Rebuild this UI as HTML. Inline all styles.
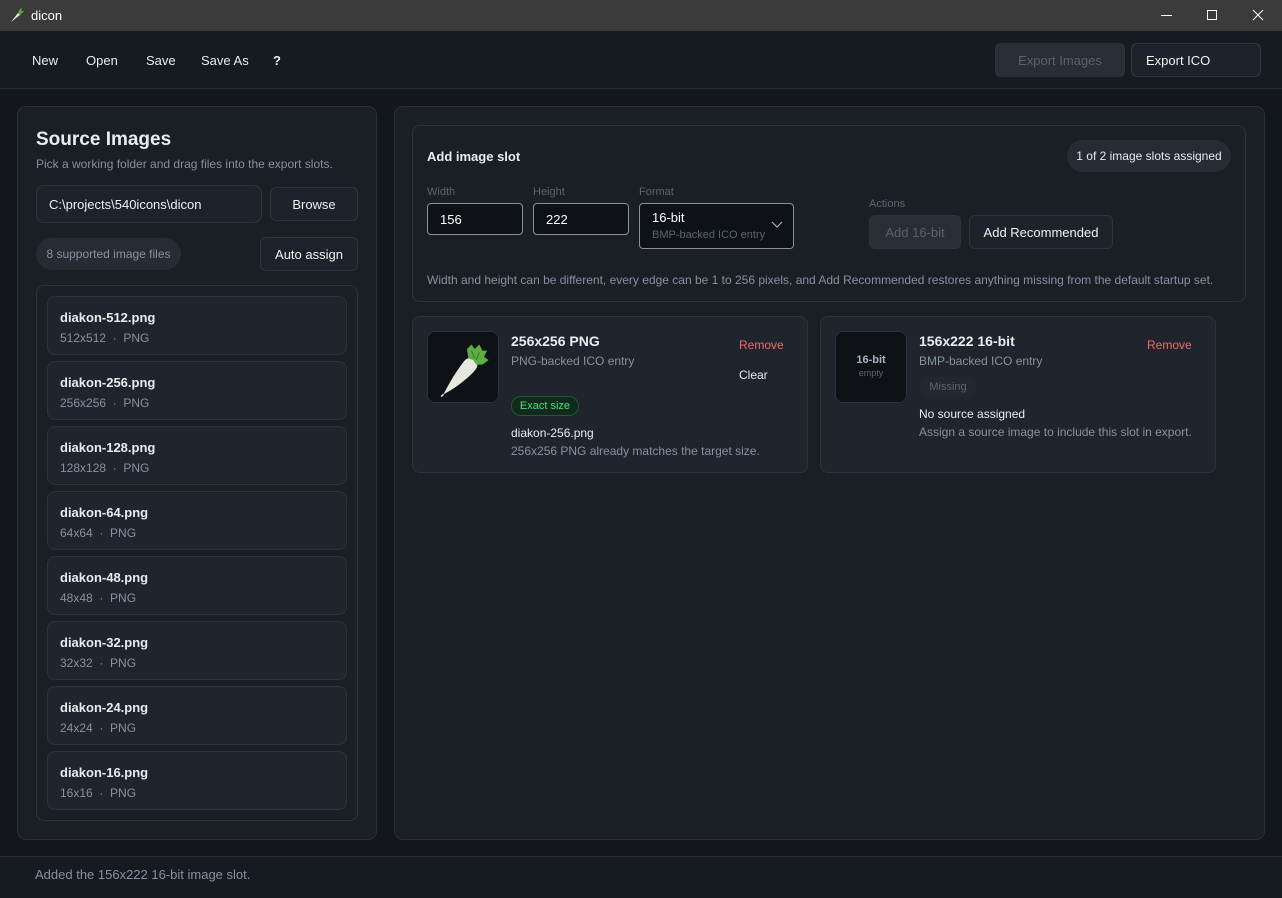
<!DOCTYPE html>
<html><head><meta charset="utf-8"><style>
*{box-sizing:border-box;margin:0;padding:0}
body{width:1282px;height:898px;background:#13171d;font-family:"Liberation Sans",sans-serif;color:#e8ecf2;position:relative;overflow:hidden;font-size:13px}
.a{position:absolute}
.tb{left:0;top:0;width:1282px;height:31px;background:#3b3b3b}
.bar{left:0;top:31px;width:1282px;height:58px;background:#161a21;border-bottom:1px solid #2a2f38}
.pan{background:#1a1e25;border:1px solid #2a2f38;border-radius:9px}
.card{background:#1f242d;border:1px solid #2d333d;border-radius:8px}
.btn{background:#1e232b;border:1px solid #2f3540;border-radius:6px;color:#eef1f5;display:flex;align-items:center;justify-content:center;font-size:13px}
.dis{background:#292d35;border-color:#2e323a;color:#5b626c}
.inp{background:#0e1116;border:1px solid #8a9099;border-radius:4px;color:#fff;padding-left:12px;display:flex;align-items:center;font-size:13px}
.lbl{font-size:11px;color:#5c6570}
.mut{color:#8792a0;font-size:12px}
.fi{left:10px;width:300px;height:59px}
.fi b{position:absolute;left:12px;top:13px;font-size:13px}
.fi span{position:absolute;left:12px;top:34px;font-size:12px;color:#8792a0}
</style></head><body>
<div class="a tb"></div>
<svg class="a" style="left:9px;top:7px" width="16" height="16" viewBox="0 0 16 16"><path d="M2 15 L9 6 L11 8 Z" fill="#e8e8e0"/><path d="M9 6 L11 2 L13 1 L12 4 L15 4 L12 7 L11 8Z" fill="#5aa844"/></svg>
<div class="a" style="left:31px;top:8px;font-size:13px;color:#fff">dicon</div>
<div class="a" style="left:1161px;top:15px;width:11px;height:1px;background:#fff"></div>
<div class="a" style="left:1207px;top:10px;width:10px;height:10px;border:1px solid #fff"></div>
<svg class="a" style="left:1252px;top:9px" width="12" height="12"><path d="M1 1L11 11M11 1L1 11" stroke="#fff" stroke-width="1"/></svg>

<div class="a bar"></div>
<div class="a" style="left:32px;top:53px;font-size:13px">New</div>
<div class="a" style="left:86px;top:53px;font-size:13px">Open</div>
<div class="a" style="left:146px;top:53px;font-size:13px">Save</div>
<div class="a" style="left:201px;top:53px;font-size:13px">Save As</div>
<div class="a" style="left:273px;top:53px;font-size:13px;font-weight:bold">?</div>
<div class="a btn dis" style="left:995px;top:43px;width:130px;height:34px">Export Images</div>
<div class="a btn" style="left:1131px;top:43px;width:130px;height:34px;justify-content:flex-start;padding-left:14px">Export ICO</div>

<div class="a pan" style="left:17px;top:106px;width:360px;height:734px"></div>
<div class="a" style="left:36px;top:129px;font-size:19px;font-weight:bold">Source Images</div>
<div class="a mut" style="left:36px;top:157px">Pick a working folder and drag files into the export slots.</div>
<div class="a btn" style="left:36px;top:185px;width:226px;height:38px;justify-content:flex-start;padding-left:12px;border-radius:8px">C:\projects\540icons\dicon</div>
<div class="a btn" style="left:270px;top:187px;width:88px;height:34px">Browse</div>
<div class="a" style="left:36px;top:238px;width:145px;height:32px;border-radius:16px;background:#262b34;color:#8792a0;font-size:12px;display:flex;align-items:center;justify-content:center">8 supported image files</div>
<div class="a btn" style="left:260px;top:237px;width:98px;height:34px">Auto assign</div>
<div class="a" style="left:36px;top:285px;width:322px;height:536px;border:1px solid #2d333d;border-radius:8px;background:#1a1e25">
<div class="a card fi" style="top:10px"><b>diakon-512.png</b><span>512x512 &nbsp;·&nbsp; PNG</span></div>
<div class="a card fi" style="top:75px"><b>diakon-256.png</b><span>256x256 &nbsp;·&nbsp; PNG</span></div>
<div class="a card fi" style="top:140px"><b>diakon-128.png</b><span>128x128 &nbsp;·&nbsp; PNG</span></div>
<div class="a card fi" style="top:205px"><b>diakon-64.png</b><span>64x64 &nbsp;·&nbsp; PNG</span></div>
<div class="a card fi" style="top:270px"><b>diakon-48.png</b><span>48x48 &nbsp;·&nbsp; PNG</span></div>
<div class="a card fi" style="top:335px"><b>diakon-32.png</b><span>32x32 &nbsp;·&nbsp; PNG</span></div>
<div class="a card fi" style="top:400px"><b>diakon-24.png</b><span>24x24 &nbsp;·&nbsp; PNG</span></div>
<div class="a card fi" style="top:465px"><b>diakon-16.png</b><span>16x16 &nbsp;·&nbsp; PNG</span></div>
</div>

<div class="a pan" style="left:394px;top:106px;width:871px;height:734px"></div>
<div class="a" style="left:412px;top:125px;width:834px;height:177px;background:#1a1e25;border:1px solid #2d333d;border-radius:8px"></div>
<div class="a" style="left:427px;top:149px;font-size:13px;font-weight:bold">Add image slot</div>
<div class="a" style="left:1067px;top:140px;width:164px;height:32px;border-radius:16px;background:#262b34;font-size:12px;display:flex;align-items:center;justify-content:center">1 of 2 image slots assigned</div>
<div class="a lbl" style="left:427px;top:186px">Width</div>
<div class="a lbl" style="left:533px;top:186px">Height</div>
<div class="a lbl" style="left:639px;top:186px">Format</div>
<div class="a lbl" style="left:869px;top:198px">Actions</div>
<div class="a inp" style="left:427px;top:203px;width:96px;height:32px">156</div>
<div class="a inp" style="left:533px;top:203px;width:96px;height:32px">222</div>
<div class="a inp" style="left:639px;top:203px;width:155px;height:46px;display:block;padding-top:6px"><div>16-bit</div><div style="font-size:11px;color:#5c6570;margin-top:4px">BMP-backed ICO entry</div></div>
<svg class="a" style="left:771px;top:221px" width="12" height="8"><path d="M1 1L6 6L11 1" stroke="#bbb" fill="none"/></svg>
<div class="a btn dis" style="left:869px;top:215px;width:92px;height:34px">Add 16-bit</div>
<div class="a btn" style="left:969px;top:215px;width:144px;height:34px">Add Recommended</div>
<div class="a mut" style="left:427px;top:273px">Width and height can be different, every edge can be 1 to 256 pixels, and Add Recommended restores anything missing from the default startup set.</div>

<div class="a card" style="left:412px;top:316px;width:396px;height:157px"></div>
<div class="a" style="left:427px;top:331px;width:72px;height:72px;background:#0e1116;border:1px solid #2d333d;border-radius:8px"></div>
<svg class="a" style="left:428px;top:332px" width="70" height="70" viewBox="0 0 90 90"><path d="M20 80 C26 68 34 54 46 38 C50 33 58 30 62 36 C66 42 62 48 58 52 C46 64 32 74 20 80Z" fill="#e6e8e0"/><path d="M20 80 L17 83" stroke="#ddd" stroke-width="2"/><path d="M52 34 L50 22 L56 16 L60 22 L66 16 L70 24 L76 24 L72 32 L78 36 L70 42 L62 42 L58 36Z" fill="#5fae45"/><path d="M56 24 L60 34 M66 26 L62 36" stroke="#3d7e2e" stroke-width="1.5"/></svg>
<div class="a" style="left:511px;top:333px;font-size:14px;font-weight:bold">256x256 PNG</div>
<div class="a mut" style="left:511px;top:354px">PNG-backed ICO entry</div>
<div class="a" style="left:739px;top:338px;font-size:12px;color:#f06a6a">Remove</div>
<div class="a" style="left:739px;top:368px;font-size:12px">Clear</div>
<div class="a" style="left:511px;top:396px;width:68px;height:20px;border-radius:10px;background:#122a1d;border:1px solid #1f5a33;color:#4ee07e;font-size:11px;display:flex;align-items:center;justify-content:center">Exact size</div>
<div class="a" style="left:511px;top:426px;font-size:12px">diakon-256.png</div>
<div class="a mut" style="left:511px;top:444px">256x256 PNG already matches the target size.</div>

<div class="a card" style="left:820px;top:316px;width:396px;height:157px"></div>
<div class="a" style="left:835px;top:331px;width:72px;height:72px;background:#0e1116;border:1px solid #2d333d;border-radius:8px;text-align:center"><div style="margin-top:22px;font-size:11px;font-weight:bold;color:#aab2be">16-bit</div><div style="font-size:9px;color:#5c6570;margin-top:2px">empty</div></div>
<div class="a" style="left:919px;top:333px;font-size:14px;font-weight:bold">156x222 16-bit</div>
<div class="a mut" style="left:919px;top:354px">BMP-backed ICO entry</div>
<div class="a" style="left:1147px;top:338px;font-size:12px;color:#f06a6a">Remove</div>
<div class="a" style="left:919px;top:377px;width:58px;height:20px;border-radius:10px;background:#232830;color:#5c6570;font-size:11px;display:flex;align-items:center;justify-content:center">Missing</div>
<div class="a" style="left:919px;top:407px;font-size:12px">No source assigned</div>
<div class="a mut" style="left:919px;top:425px">Assign a source image to include this slot in export.</div>

<div class="a" style="left:0;top:856px;width:1282px;height:42px;background:#161a21;border-top:1px solid #2a2f38"></div>
<div class="a" style="left:35px;top:867px;font-size:13px;color:#8792a0">Added the 156x222 16-bit image slot.</div>
</body></html>
